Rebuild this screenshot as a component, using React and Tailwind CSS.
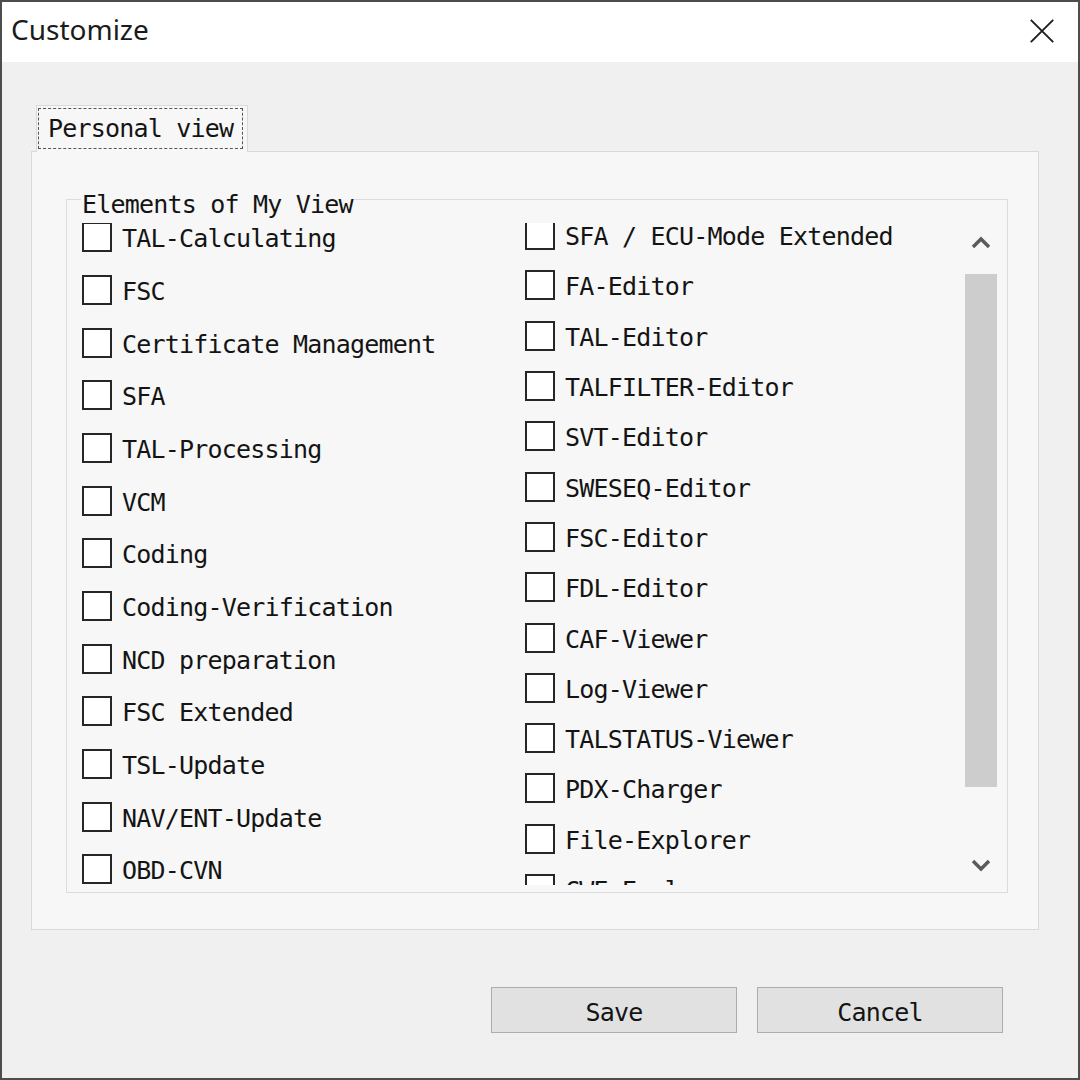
import React from "react";

const leftItems = [
  "TAL-Calculating",
  "FSC",
  "Certificate Management",
  "SFA",
  "TAL-Processing",
  "VCM",
  "Coding",
  "Coding-Verification",
  "NCD preparation",
  "FSC Extended",
  "TSL-Update",
  "NAV/ENT-Update",
  "OBD-CVN",
];

const rightItems = [
  "SFA / ECU-Mode Extended",
  "FA-Editor",
  "TAL-Editor",
  "TALFILTER-Editor",
  "SVT-Editor",
  "SWESEQ-Editor",
  "FSC-Editor",
  "FDL-Editor",
  "CAF-Viewer",
  "Log-Viewer",
  "TALSTATUS-Viewer",
  "PDX-Charger",
  "File-Explorer",
  "CWE-Explorer",
];

const mono = "font-['DejaVu_Sans_Mono',monospace] text-[25px] tracking-[-0.8px] text-[#141414]";

function Check({ label, tall }) {
  return (
    <label className={`flex items-center shrink-0 ${tall ? "h-[52.67px]" : "h-[50.3px]"}`}>
      <span className="w-[30px] h-[30px] shrink-0 border-2 border-[#262626] bg-white" />
      <span className={`ml-[10px] mt-[4px] whitespace-nowrap leading-[30px] ${mono}`}>{label}</span>
    </label>
  );
}

function Chevron({ up }) {
  return (
    <svg width="20" height="14" viewBox="0 0 20 14">
      <polyline
        points={up ? "2,12 10,4 18,12" : "2,2 10,10 18,2"}
        fill="none"
        stroke="#5a5a5a"
        strokeWidth="3.4"
      />
    </svg>
  );
}

export default function App() {
  return (
    <div className="w-[1080px] h-[1080px] flex flex-col border-2 border-[#4d4d4d] bg-[#f0f0f0] overflow-hidden">
      {/* title bar */}
      <div className="h-[60px] shrink-0 bg-white flex items-start justify-between">
        <div className="pl-[9px] pt-[13px] font-['Noto_Sans',sans-serif] text-[28px] leading-[28px] text-[#1b1b1b]">
          Customize
        </div>
        <svg className="mt-[17px] mr-[24px]" width="24" height="24" viewBox="0 0 24 24">
          <path d="M0.8 0.8 L23.2 23.2 M23.2 0.8 L0.8 23.2" stroke="#1e1e1e" strokeWidth="1.9" />
        </svg>
      </div>

      {/* body */}
      <div className="flex-1 flex flex-col">
        {/* tab strip */}
        <div className="mt-[43px] flex">
          <div className="ml-[34px] w-[212px] h-[47px] relative z-10 -mb-px border border-b-0 border-[#dadada] bg-[#f7f7f7] pt-[2px] pl-[1px] pr-[4px] pb-[3px]">
            <div className={`h-full border border-dashed border-[#555] flex items-center pl-[9px] ${mono}`}>
              Personal view
            </div>
          </div>
        </div>

        {/* tab panel */}
        <div className="ml-[29px] w-[1008px] h-[779px] border border-[#d9d9d9] bg-[#f7f7f7] flex flex-col">
          {/* group box */}
          <div className="relative mt-[47px] ml-[34px] w-[942px] h-[694px] border border-[#dcdcdc]">
            <span className={`absolute left-[14px] top-[-7px] px-[1px] leading-[24px] bg-[#f7f7f7] ${mono}`}>
              Elements of My View
            </span>

            <div className="mt-[23px] h-[662px] flex overflow-hidden">
              <div className="pl-[15px] w-[458px] shrink-0 flex flex-col mt-[-12px]">
                {leftItems.map((t) => (
                  <Check key={t} label={t} tall />
                ))}
              </div>
              <div className="flex-1 flex flex-col mt-[-13px]">
                {rightItems.map((t) => (
                  <Check key={t} label={t} />
                ))}
              </div>
              <div className="w-[34px] mr-[9px] shrink-0 flex flex-col items-center">
                <div className="h-[51px] w-full flex justify-center pt-[12px]">
                  <Chevron up />
                </div>
                <div className="h-[513px] w-[32px] bg-[#cdcdcd]" />
                <div className="flex-1 w-full flex justify-center items-end pb-[12px]">
                  <Chevron />
                </div>
              </div>
            </div>
          </div>
        </div>

        {/* buttons */}
        <div className="mt-[57px] flex justify-end gap-[20px] mr-[75px]">
          <button className={`w-[246px] h-[46px] border border-[#adadad] bg-[#e1e1e1] pt-[6px] ${mono}`}>Save</button>
          <button className={`w-[246px] h-[46px] border border-[#adadad] bg-[#e1e1e1] pt-[6px] ${mono}`}>Cancel</button>
        </div>
      </div>
    </div>
  );
}
